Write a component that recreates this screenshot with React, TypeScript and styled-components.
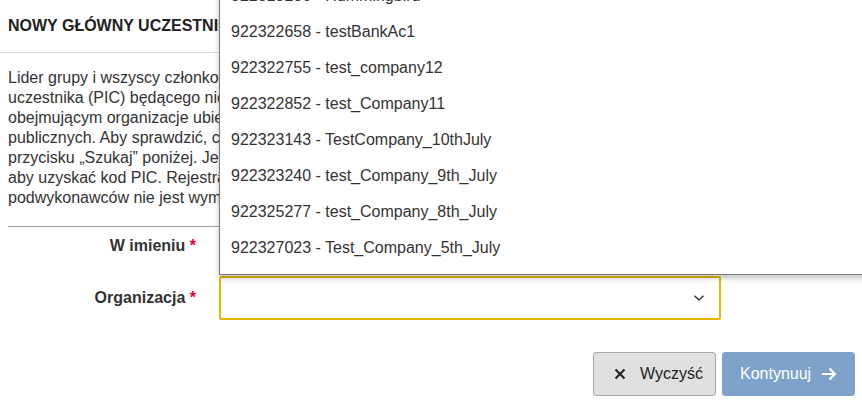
import styled, { createGlobalStyle } from "styled-components";

const GlobalStyle = createGlobalStyle`
	html, body {
		margin: 0;
		padding: 0;
		background: #ffffff;
		overflow: hidden;
	}
	body {
		font-family: "Liberation Sans", Arial, sans-serif;
		color: #333333;
	}
	* {
		box-sizing: border-box;
	}
`;

const options = [
	"922319206 - Hummingbird",
	"922322658 - testBankAc1",
	"922322755 - test_company12",
	"922322852 - test_Company11",
	"922323143 - TestCompany_10thJuly",
	"922323240 - test_Company_9th_July",
	"922325277 - test_Company_8th_July",
	"922327023 - Test_Company_5th_July",
];

const descriptionLines = [
	"Lider grupy i wszyscy członkowie konsorcjum muszą posiadać 9-cyfrowy kod identyfikacyjny",
	"uczestnika (PIC) będącego niepowtarzalnym identyfikatorem w Rejestrze Uczestników",
	"obejmującym organizacje ubiegające się o finansowanie UE lub uczestniczące w zamówieniach",
	"publicznych. Aby sprawdzić, czy Twoja organizacja ma już kod PIC, wpisz jej nazwę i skorzystaj z",
	"przycisku „Szukaj” poniżej. Jeżeli organizacja nie ma kodu PIC, musi zarejestrować się w Rejestrze,",
	"aby uzyskać kod PIC. Rejestracja jest bezpłatna i zajmuje kilka minut. Rejestracja",
	"podwykonawców nie jest wymagana.",
];

export default function App() {
	return (
		<>
			<GlobalStyle />
			<Page>
				<Header>
					<Heading>NOWY GŁÓWNY UCZESTNIK</Heading>
				</Header>

				<Description>
					{descriptionLines.map((line) => (
						<DescriptionLine key={line}>{line}</DescriptionLine>
					))}
				</Description>

				<Divider />

				<Form>
					<FormRow>
						<Label>
							W imieniu <Required>*</Required>
						</Label>
						<PlainInput />
					</FormRow>

					<FormRow tall>
						<Label>
							Organizacja <Required>*</Required>
						</Label>
						<SelectWrap>
							<OptionList>
								{options.map((option) => (
									<OptionItem key={option}>{option}</OptionItem>
								))}
							</OptionList>
							<SelectBox>
								<svg width="12" height="8" viewBox="0 0 12 8" fill="none">
									<path
										d="M1.5 1.8 L6 6 L10.5 1.8"
										stroke="#333"
										strokeWidth="1.4"
									/>
								</svg>
							</SelectBox>
						</SelectWrap>
					</FormRow>
				</Form>

				<Actions>
					<ClearButton>
						<svg width="12" height="12" viewBox="0 0 12 12" fill="none">
							<path d="M1.5 1.5 L10.5 10.5 M10.5 1.5 L1.5 10.5" stroke="#222" strokeWidth="2" />
						</svg>
						Wyczyść
					</ClearButton>
					<ContinueButton>
						Kontynuuj
						<svg width="16" height="14" viewBox="0 0 16 14" fill="none">
							<path
								d="M1 7 H14 M8.5 1.5 L14 7 L8.5 12.5"
								stroke="#ffffff"
								strokeWidth="2"
							/>
						</svg>
					</ContinueButton>
				</Actions>
			</Page>
		</>
	);
}

const Page = styled.div`
	width: 862px;
	min-height: 403px;
	display: flex;
	flex-direction: column;
`;

const Header = styled.div`
	height: 53px;
	display: flex;
	align-items: center;
	padding: 0 8px 1px;
	border-bottom: 1px solid #dddddd;
`;

const Heading = styled.h2`
	margin: 0;
	font-size: 16px;
	font-weight: bold;
	color: #222222;
	white-space: nowrap;
`;

const Description = styled.p`
	margin: 15px 0 0;
	padding: 0 8px;
	font-size: 16px;
	line-height: 20px;
	color: #333333;
`;

const DescriptionLine = styled.span`
	display: block;
	white-space: nowrap;
`;

const Divider = styled.hr`
	margin: 18px 0 0 8px;
	border: 0;
	border-top: 1px solid #a0a0a0;
	height: 0;
`;

const Form = styled.div`
	display: flex;
	flex-direction: column;
	gap: 11px;
	padding: 0 8px;
`;

const FormRow = styled.div<{ tall?: boolean }>`
	display: flex;
	align-items: center;
	gap: 23px;
	height: ${({ tall }) => (tall ? "44px" : "38px")};
`;

const Label = styled.label`
	width: 188px;
	text-align: right;
	font-size: 16px;
	font-weight: bold;
	color: #333333;
	white-space: nowrap;
`;

const Required = styled.span`
	color: #e4002b;
`;

const PlainInput = styled.div`
	width: 502px;
	height: 38px;
	border: 1px solid #bbbbbb;
`;

const SelectWrap = styled.div`
	position: relative;
	width: 502px;
	height: 44px;
`;

const SelectBox = styled.div`
	height: 44px;
	display: flex;
	align-items: center;
	justify-content: flex-end;
	padding-right: 14px;
	border: 2px solid #e6b700;
	border-radius: 2px;
	background: #ffffff;
`;

const OptionList = styled.ul`
	position: absolute;
	left: 0;
	bottom: calc(100% + 1px);
	width: 700px;
	margin: 0;
	padding: 0 0 8px;
	list-style: none;
	background: #ffffff;
	border-left: 1px solid #7a7a7a;
	border-bottom: 1px solid #7a7a7a;
	box-shadow: 0 3px 6px rgba(0, 0, 0, 0.25);
	z-index: 10;
`;

const OptionItem = styled.li`
	height: 36px;
	display: flex;
	align-items: center;
	padding-left: 11px;
	font-size: 16px;
	color: #333333;
	white-space: nowrap;
`;

const Actions = styled.div`
	display: flex;
	justify-content: flex-end;
	gap: 6px;
	margin-top: 32px;
	padding-right: 7px;
`;

const BaseButton = styled.button`
	height: 44px;
	display: flex;
	align-items: center;
	font-family: "Liberation Sans", Arial, sans-serif;
	font-size: 16px;
	border-radius: 3px;
	cursor: pointer;
`;

const ClearButton = styled(BaseButton)`
	width: 123px;
	gap: 14px;
	padding: 0 0 0 20px;
	background: #e0e0e0;
	border: 1px solid #a8a8a8;
	color: #222222;
`;

const ContinueButton = styled(BaseButton)`
	width: 133px;
	gap: 10px;
	padding: 0 0 0 17px;
	background: #7fa2ca;
	border: 1px solid #7fa2ca;
	color: #ffffff;
`;
